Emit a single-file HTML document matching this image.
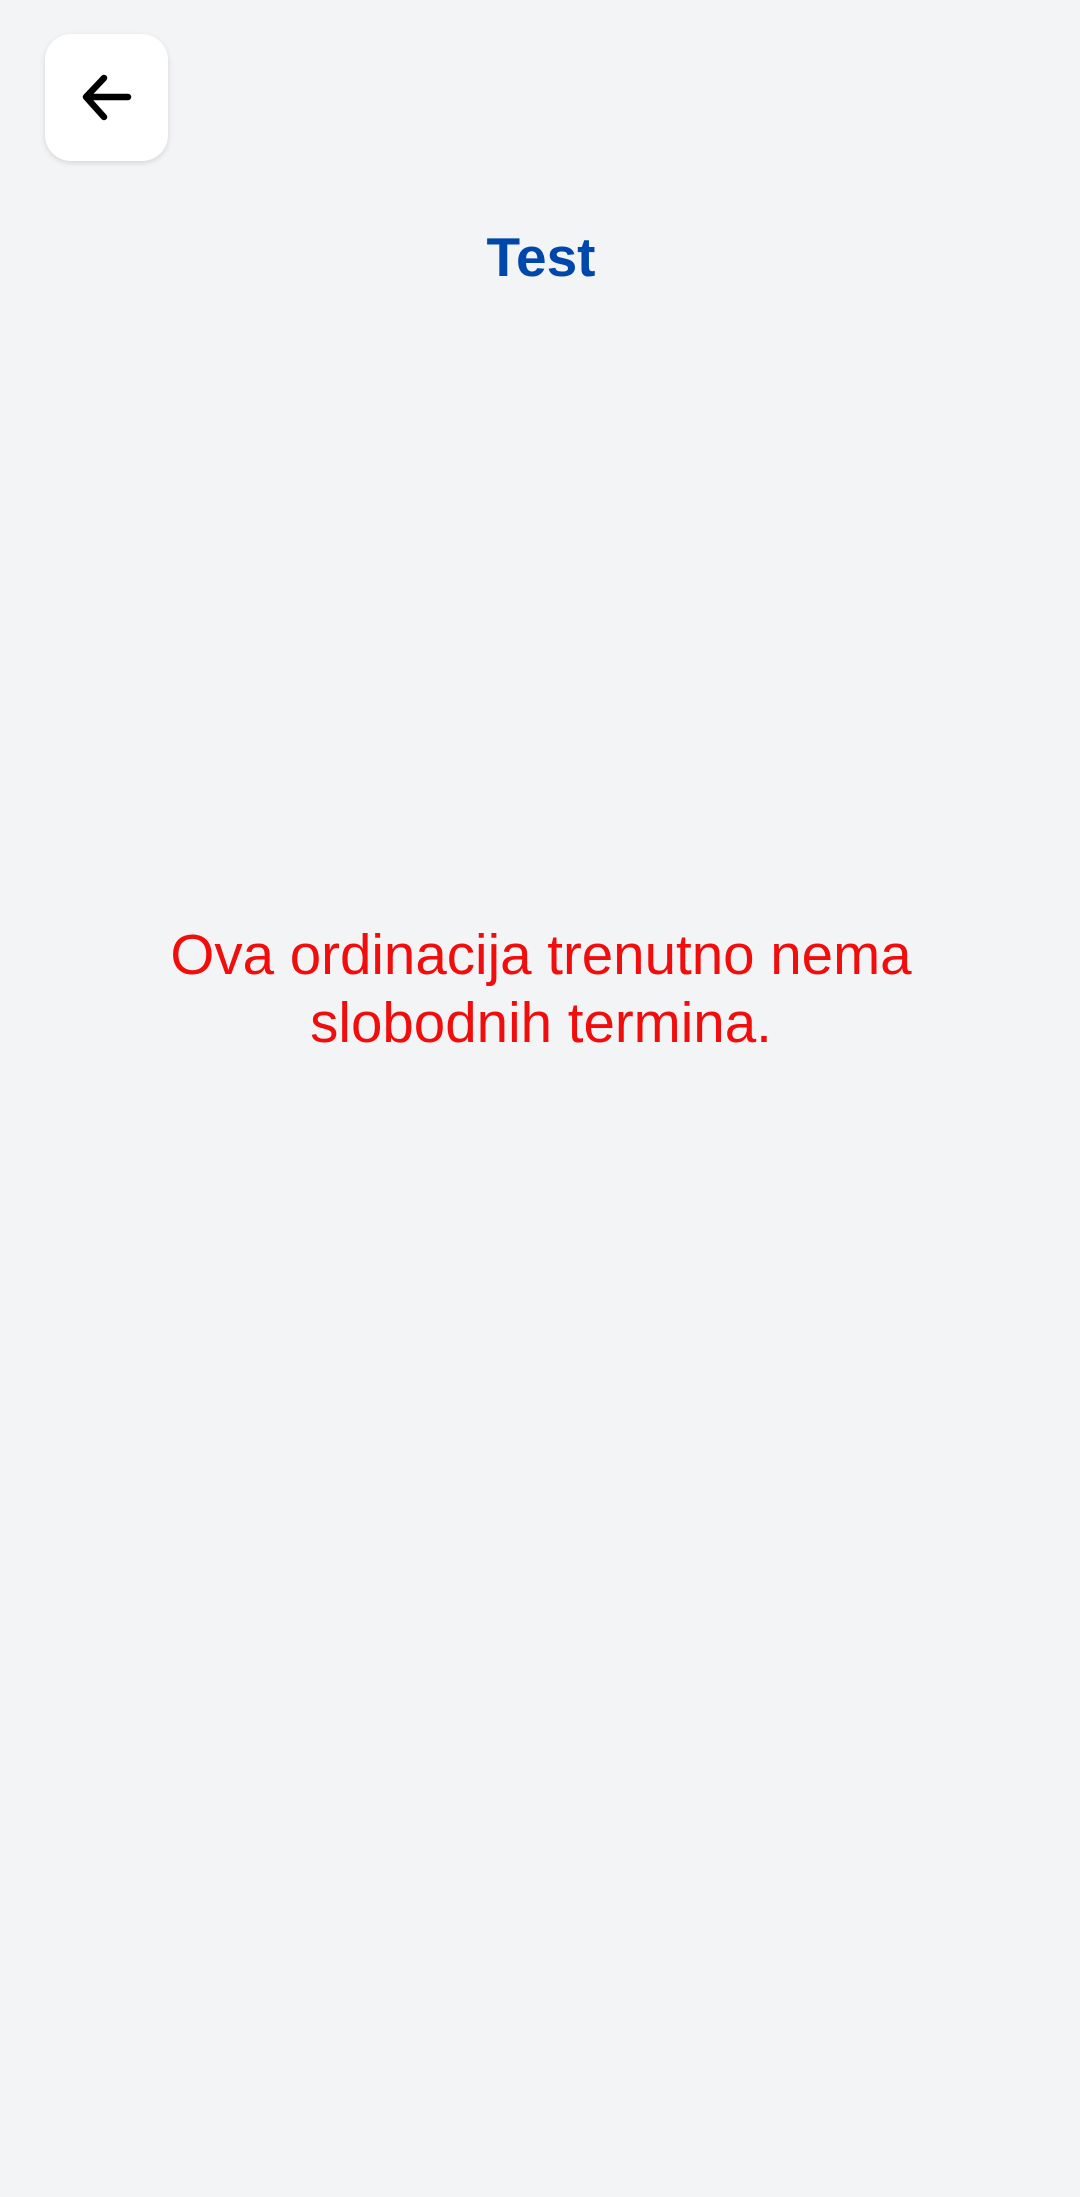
<!DOCTYPE html>
<html><head><style>
html,body{margin:0;padding:0;}
body{width:1080px;height:2197px;background:#f3f4f6;position:relative;overflow:hidden;font-family:"Liberation Sans",sans-serif;}
.btn{position:absolute;left:45px;top:34px;width:123px;height:127px;background:#fff;border-radius:26px;box-shadow:0 2px 6px rgba(0,0,0,0.12);}
.btn svg{position:absolute;left:0;top:0;}
.title{position:absolute;left:0;width:1082px;top:224px;text-align:center;font-weight:bold;font-size:55px;line-height:66px;color:#0047ab;}
.msg{position:absolute;left:0;width:1082px;top:921px;text-align:center;font-size:56.5px;line-height:68px;color:#f20d0d;}
</style></head><body>
<div class="btn"><svg width="123" height="127" viewBox="0 0 123 127"><path d="M83 63H42M59 44L41 63L59 83" stroke="#000" stroke-width="6.5" fill="none" stroke-linecap="round" stroke-linejoin="round"/></svg></div>
<div class="title">Test</div>
<div class="msg">Ova ordinacija trenutno nema<br>slobodnih termina.</div>
</body></html>
